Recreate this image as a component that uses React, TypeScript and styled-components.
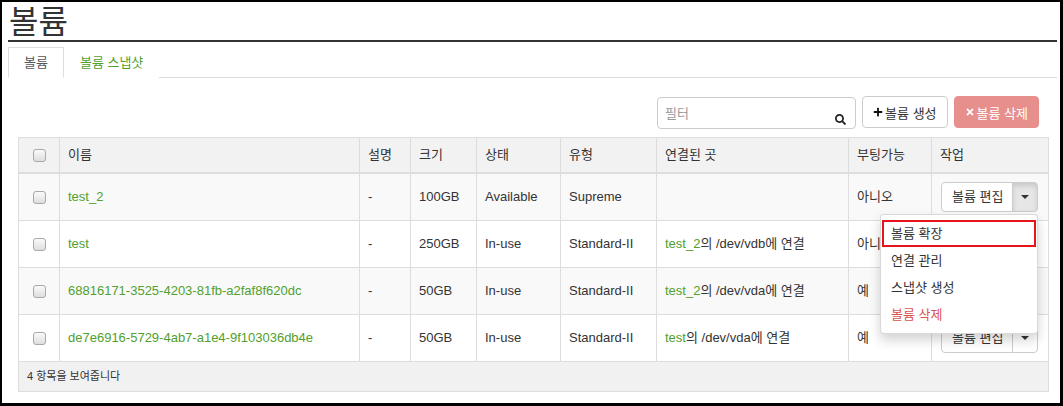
import React from 'react'
import styled, { createGlobalStyle } from 'styled-components'
import { FaPlus, FaSearch, FaTimes } from 'react-icons/fa'

const GlobalStyle = createGlobalStyle`
  html, body {
    margin: 0;
    padding: 0;
    background: #fff;
  }
  body {
    font-family: "Liberation Sans", "Noto Sans CJK KR", sans-serif;
    font-size: 13px;
    color: #333;
  }
`

const Frame = styled.div`
  box-sizing: border-box;
  width: 1063px;
  height: 406px;
  border: 2px solid #000;
  border-right-width: 3px;
  border-bottom-width: 3px;
  padding: 0 3px 0 6px;
  overflow: hidden;
  background: #fff;
`

const Title = styled.h1`
  margin: 0;
  padding: 2px 0 0 1px;
  font-size: 32px;
  line-height: 36px;
  font-weight: normal;
  color: #333;
  border-bottom: 2px solid #333;
`

const Tabs = styled.ul`
  display: flex;
  list-style: none;
  margin: 5px 0 0;
  padding: 0;
  border-bottom: 1px solid #ddd;
`

const Tab = styled.li<{ $active?: boolean }>`
  margin-bottom: -1px;
  padding: 0 15px;
  line-height: 29px;
  border: 1px solid ${p => (p.$active ? '#ddd' : 'transparent')};
  border-bottom-color: ${p => (p.$active ? '#fff' : 'transparent')};
  background: #fff;
  color: ${p => (p.$active ? '#555' : '#52a02d')};
  cursor: pointer;
`

const TabBody = styled.div`
  padding: 18px 9px 0 10px;
`

const Toolbar = styled.div`
  display: flex;
  justify-content: flex-end;
  align-items: flex-start;
  gap: 6px;
  margin: 0 9px 8px 0;
  height: 33px;
`

const FilterBox = styled.div`
  position: relative;
  margin-top: 1px;
`

const FilterInput = styled.input`
  box-sizing: border-box;
  width: 199px;
  height: 32px;
  padding: 0 28px 0 7px;
  border: 1px solid #ccc;
  border-radius: 4px;
  font: inherit;
  color: #333;
  outline: none;
  &::placeholder {
    color: #999;
  }
`

const SearchMark = styled.span`
  position: absolute;
  right: 10px;
  bottom: 4px;
  display: flex;
  color: #222;
  font-size: 11px;
`

const Button = styled.button<{ $danger?: boolean }>`
  display: inline-flex;
  align-items: center;
  gap: 2px;
  height: 32px;
  padding: 0 10px;
  border: 1px solid ${p => (p.$danger ? '#e68f8c' : '#ccc')};
  border-radius: 4px;
  background: ${p => (p.$danger ? '#e68f8c' : '#fff')};
  color: ${p => (p.$danger ? '#fff' : '#333')};
  font: inherit;
  svg {
    font-size: 10px;
    color: ${p => (p.$danger ? '#fff' : '#111')};
  }
`

const Table = styled.table`
  width: 100%;
  table-layout: fixed;
  border-collapse: collapse;
  border: 1px solid #ddd;
`

const Th = styled.th<{ $center?: boolean }>`
  padding: 8px;
  line-height: 18px;
  text-align: ${p => (p.$center ? 'center' : 'left')};
  font-weight: normal;
  color: #333;
  background: #f2f2f2;
  border: 1px solid #ddd;
  border-bottom-width: 2px;
  white-space: nowrap;
`

const Tr = styled.tr<{ $striped?: boolean }>`
  background: ${p => (p.$striped ? '#f9f9f9' : '#fff')};
`

const Td = styled.td<{ $center?: boolean }>`
  padding: 8px;
  height: 30px;
  line-height: 18px;
  border: 1px solid #ddd;
  text-align: ${p => (p.$center ? 'center' : 'left')};
  white-space: nowrap;
  overflow: visible;
`

const FooterCell = styled.td`
  padding: 6px 8px;
  line-height: 17px;
  font-size: 11px;
  background: #f1f1f1;
  border: 1px solid #ddd;
`

const Check = styled.span`
  display: inline-block;
  vertical-align: middle;
  box-sizing: border-box;
  width: 13px;
  height: 13px;
  border: 1px solid #a9a9a9;
  border-radius: 3px;
  background: linear-gradient(#fafafa, #dedede);
`

const Link = styled.a`
  color: #52a02d;
  text-decoration: none;
`

const BtnGroup = styled.div`
  position: relative;
  display: inline-flex;
  vertical-align: middle;
  margin-left: 1px;
`

const GroupMain = styled.button`
  height: 30px;
  width: 72px;
  padding: 0 10px;
  border: 1px solid #ccc;
  border-radius: 4px 0 0 4px;
  background: #fff;
  color: #333;
  font: inherit;
`

const GroupCaret = styled.button<{ $open?: boolean }>`
  width: 26px;
  height: 30px;
  margin-left: -1px;
  border: 1px solid #ccc;
  border-radius: 0 4px 4px 0;
  background: ${p => (p.$open ? '#e6e6e6' : '#fff')};
  box-shadow: ${p => (p.$open ? 'inset 0 3px 5px rgba(0,0,0,.125)' : 'none')};
  display: flex;
  align-items: center;
  justify-content: center;
  padding: 0;
  &::after {
    content: '';
    border-top: 4px solid #333;
    border-left: 4px solid transparent;
    border-right: 4px solid transparent;
  }
`

const Menu = styled.ul`
  position: absolute;
  top: 32px;
  right: 0;
  z-index: 10;
  box-sizing: border-box;
  width: 158px;
  margin: 0;
  padding: 5px 0;
  list-style: none;
  background: #fff;
  border: 1px solid rgba(0, 0, 0, 0.15);
  border-radius: 4px;
  box-shadow: 0 6px 12px rgba(0, 0, 0, 0.175);
`

const MenuItem = styled.li<{ $danger?: boolean; $marked?: boolean }>`
  position: relative;
  padding: 0 10px;
  line-height: 27px;
  color: ${p => (p.$danger ? '#d9534f' : '#333')};
  &::after {
    content: '';
    display: ${p => (p.$marked ? 'block' : 'none')};
    position: absolute;
    left: 1px;
    right: 1px;
    top: 0;
    bottom: 0;
    border: 2px solid #e8141c;
  }
`

type Volume = {
  name: string
  size: string
  status: string
  type: string
  host?: string
  device?: string
  bootable: string
}

const volumes: Volume[] = [
  { name: 'test_2', size: '100GB', status: 'Available', type: 'Supreme', bootable: '아니오' },
  { name: 'test', size: '250GB', status: 'In-use', type: 'Standard-II', host: 'test_2', device: '/dev/vdb', bootable: '아니오' },
  { name: '68816171-3525-4203-81fb-a2faf8f620dc', size: '50GB', status: 'In-use', type: 'Standard-II', host: 'test_2', device: '/dev/vda', bootable: '예' },
  { name: 'de7e6916-5729-4ab7-a1e4-9f103036db4e', size: '50GB', status: 'In-use', type: 'Standard-II', host: 'test', device: '/dev/vda', bootable: '예' },
]

const colWidths = [41, 300, 51, 66, 84, 96, 192, 83, 117]

const App = () => {
  return (
    <>
      <GlobalStyle />
      <Frame>
        <Title>볼륨</Title>
        <Tabs>
          <Tab $active>볼륨</Tab>
          <Tab>볼륨 스냅샷</Tab>
        </Tabs>
        <TabBody>
          <Toolbar>
            <FilterBox>
              <FilterInput placeholder='필터' />
              <SearchMark><FaSearch /></SearchMark>
            </FilterBox>
            <Button><FaPlus />볼륨 생성</Button>
            <Button $danger disabled><FaTimes />볼륨 삭제</Button>
          </Toolbar>
          <Table>
            <colgroup>
              { colWidths.map((w, i) => <col key={ `col-${i}` } style={ { width: w } } />) }
            </colgroup>
            <thead>
              <tr>
                <Th $center><Check /></Th>
                <Th>이름</Th>
                <Th>설명</Th>
                <Th>크기</Th>
                <Th>상태</Th>
                <Th>유형</Th>
                <Th>연결된 곳</Th>
                <Th>부팅가능</Th>
                <Th>작업</Th>
              </tr>
            </thead>
            <tbody>
              { volumes.map((v, i) => (
                <Tr key={ `vol-${i}` } $striped={ i % 2 === 0 }>
                  <Td $center><Check /></Td>
                  <Td><Link>{ v.name }</Link></Td>
                  <Td>-</Td>
                  <Td>{ v.size }</Td>
                  <Td>{ v.status }</Td>
                  <Td>{ v.type }</Td>
                  <Td>
                    { v.host && (<><Link>{ v.host }</Link>의 { v.device }에 연결</>) }
                  </Td>
                  <Td>{ v.bootable }</Td>
                  <Td>
                    <BtnGroup>
                      <GroupMain>볼륨 편집</GroupMain>
                      <GroupCaret $open={ i === 0 } />
                      { i === 0 && (
                        <Menu>
                          <MenuItem $marked>볼륨 확장</MenuItem>
                          <MenuItem>연결 관리</MenuItem>
                          <MenuItem>스냅샷 생성</MenuItem>
                          <MenuItem $danger>볼륨 삭제</MenuItem>
                        </Menu>
                      ) }
                    </BtnGroup>
                  </Td>
                </Tr>
              )) }
              <tr>
                <FooterCell colSpan={ 9 }>4 항목을 보여줍니다</FooterCell>
              </tr>
            </tbody>
          </Table>
        </TabBody>
      </Frame>
    </>
  )
}

export default App
